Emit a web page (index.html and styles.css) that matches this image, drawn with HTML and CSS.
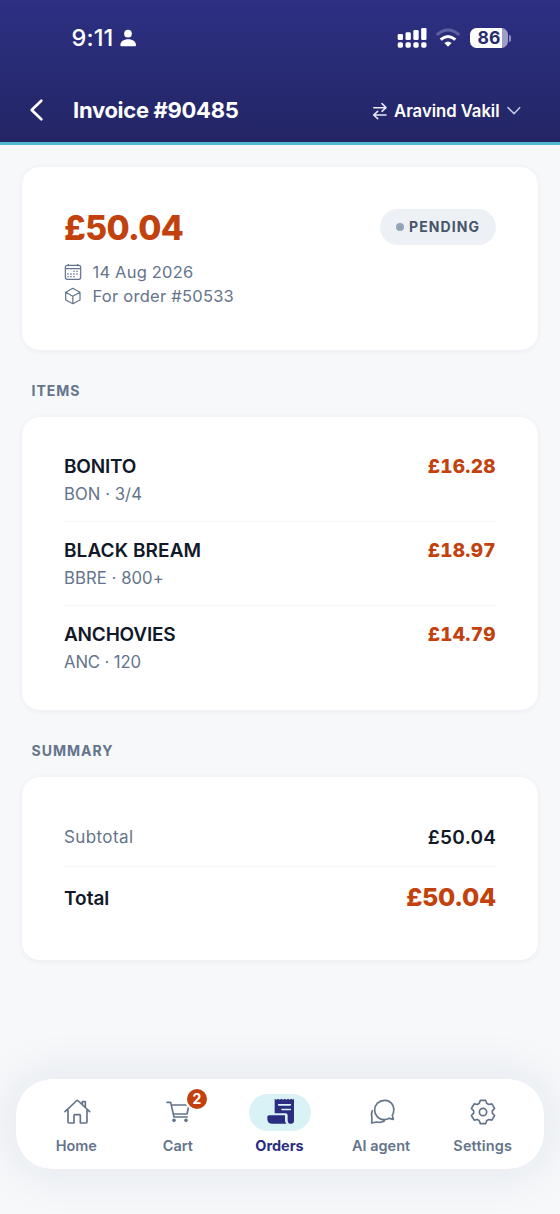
FILE: index.html
```html
<!DOCTYPE html>
<html lang="en">
<head>
<meta charset="utf-8">
<title>Invoice #90485</title>
<link rel="stylesheet" href="styles.css">
</head>
<body>
<div class="app">
  <header class="header">
    <div class="status">
      <div class="clock"><span class="time">9:11</span>
        <svg class="person" width="16" height="18" viewBox="362 87 48 54"><circle cx="386" cy="101" r="11.5"/><path d="M363 136c0-11 10-18 23.5-18S410 125 410 136q0 3-3 3H366q-3 0-3-3z"/></svg>
      </div>
      <div class="indicators">
        <svg width="30" height="22" viewBox="350 80 90 66" fill="#fff"><rect x="352" y="101" width="16" height="18" rx="4"/><rect x="375.500" y="96" width="16" height="23" rx="4"/><rect x="399" y="89" width="16" height="30" rx="4"/><rect x="422.500" y="83" width="16" height="36" rx="4"/><rect x="352" y="126" width="16" height="16" rx="5"/><rect x="375.500" y="126" width="16" height="16" rx="5"/><rect x="399" y="126" width="16" height="16" rx="5"/><rect x="422.500" y="126" width="16" height="16" rx="5"/></svg>
        <svg class="wifi" width="26" height="22" viewBox="466 80 78 66" fill="none"><path d="M471 104q34-30 68 0" stroke="#5f60a0" stroke-width="9"/><path d="M483 118q22-19 44 0" stroke="#fff" stroke-width="9"/><path d="M505 139l-11-11q11-9 22 0z" fill="#fff"/></svg>
        <div class="battery"><span class="battery-level">86</span></div><i class="battery-cap"></i>
      </div>
    </div>
    <div class="toolbar">
      <svg class="back" width="16" height="24" viewBox="86 295 48 72"><path d="M123 303L94 331l29 28"/></svg>
      <h1 class="title">Invoice #90485</h1>
      <div class="account">
        <svg width="16" height="18" viewBox="275 304 48 54" stroke="#e8e8f6"><path d="M280 321h36M305 309l12 12-12 11M317 343h-36M292 332l-12 11 12 11"/></svg>
        <span class="account-name">Aravind Vakil</span>
        <svg width="14" height="10" viewBox="683 317 42 30" stroke="#c3c4e2"><path d="M686 322l18 18 17-18"/></svg>
      </div>
    </div>
  </header>

  <main class="content">
    <section class="card overview">
      <div>
        <div class="amount">£50.04</div>
        <div class="meta"><svg width="18" height="18" viewBox="162 325 54 54"><rect x="166" y="332" width="46" height="42" rx="6"/><path d="M166 342h46M175 328v7M203 328v7"/><path class="dots" d="M190 350h4M199 350h4M172 358h4M181 358h4M190 358h4M199 358h4M172 366h4M181 366h4M190 366h4"/></svg><span class="date">14 Aug 2026</span></div>
        <div class="meta"><svg width="18" height="18" viewBox="162 395 54 54"><path d="M188.500 399l21.500 12v23l-21.500 11-21.500-11v-23zM167 411l21.500 12 21.500-12M188.500 423v22"/></svg><span class="order">For order #50533</span></div>
      </div>
      <div class="pill"><i class="dot"></i><span>PENDING</span></div>
    </section>

    <h2 class="label">ITEMS</h2>
    <section class="card items">
      <div class="item"><div><div class="name">BONITO</div><div class="sku">BON · 3/4</div></div><div class="price">£16.28</div></div>
      <div class="item"><div><div class="name wide">BLACK BREAM</div><div class="sku">BBRE · 800+</div></div><div class="price">£18.97</div></div>
      <div class="item"><div><div class="name">ANCHOVIES</div><div class="sku narrow">ANC · 120</div></div><div class="price">£14.79</div></div>
    </section>

    <h2 class="label">SUMMARY</h2>
    <section class="card summary">
      <div class="sum-row"><span class="sub-name">Subtotal</span><span class="sub-value">£50.04</span></div>
      <div class="sum-row total"><span class="total-name">Total</span><span class="total-value">£50.04</span></div>
    </section>
  </main>

  <nav class="tabs">
    <a class="tab"><span class="tab-icon"><svg viewBox="157 115 84 84"><path d="M163 156l34-32q3-3 6 0l34 32M215 133v-7h9v15M172 151v36q0 3 3 3h15v-23q0-2 2-2h15q2 0 2 2v23h17q3 0 3-3v-36"/></svg></span><span class="tab-text">Home</span></a>
    <a class="tab"><span class="tab-icon"><svg viewBox="462 115 84 84"><path d="M471 128h11l10 44h40M485 136h52l-6 27h-41"/><g fill="#64748b" stroke="none"><circle cx="492" cy="182" r="5.500"/><circle cx="528" cy="182" r="5.500"/></g></svg><b class="badge">2</b></span><span class="tab-text">Cart</span></a>
    <a class="tab active"><span class="tab-icon"><svg viewBox="165 85.500 84 84"><g fill="#2b2d80" stroke="none"><path d="M191 88l5 3 5-3 5 3 5-3 5 3 5-3 5 3 5-3 5 3 5-3 5 3 3-3v65q0 10-9 10-10 0-10-11v-15q0-6-6-6h-33z"/><path d="M174 137h46q2 0 2 2v14q0 6 4 10h-42q-15 0-15-15v-6q0-5 5-5z"/></g><path class="lines" d="M203 106h35M213 120h25"/></svg></span><span class="tab-text">Orders</span></a>
    <a class="tab"><span class="tab-icon"><svg viewBox="81 115 84 84"><path d="M154 167c10-18 3-45-24-45-16 0-29 13-29 29s12 29 29 29q8 0 15-4l12 3zM94 153c-5 10-2 18-1 23l-1 14 15-3q12 3 23-3"/></svg></span><span class="tab-text">AI agent</span></a>
    <a class="tab"><span class="tab-icon"><svg viewBox="-42 -42 84 84"><path d="M-8-35H8L11-26 17-22.500 26.500-24.500 34.800-10.500 28-3.500V3.500L34.800 10.500 26.500 24.500 17 22.500 11 26 8 35H-8L-11 26-17 22.500-26.500 24.500-34.800 10.500-28 3.500V-3.500L-34.800-10.500-26.500-24.500-17-22.500-11-26Z"/><circle r="11"/></svg></span><span class="tab-text settings">Settings</span></a>
  </nav>
</div>
</body>
</html>
```
FILE: styles.css
```css
* { box-sizing: border-box; }
body { margin: 0; font-family: Inter, "Liberation Sans", sans-serif; background: #f6f8fa; color: #111827; }
svg { display: block; flex: none; }
.app { height: 1214px; display: flex; flex-direction: column; overflow: hidden; }

.header { height: 145px; background: linear-gradient(#2d3083, #232565); border-bottom: 3px solid #50b8d1; color: #fff; }
.status { height: 76px; padding: 0 49px 0 71.5px; display: flex; align-items: center; justify-content: space-between; }
.clock { display: flex; align-items: center; gap: 7px; }
.time { font-size: 23.5px; font-weight: 500; letter-spacing: .1px; line-height: 28px; }
.person { fill: #fff; }
.indicators { display: flex; align-items: center; }
.wifi { margin: 0 9px 0 8px; }
.battery { width: 38px; height: 20px; border-radius: 6.5px; background: linear-gradient(90deg, #fff 32px, #9d9dc6 32px); display: flex; align-items: center; justify-content: center; }
.battery-level { color: #292b70; font-size: 17.5px; font-weight: 700; line-height: 20px; }
.battery-cap { width: 2px; height: 7px; margin-left: 1px; border-radius: 0 2px 2px 0; background: #8f90bd; }
.toolbar { height: 66px; padding: 2px 39px 0 28.5px; display: flex; align-items: center; }
.toolbar svg { fill: none; stroke-width: 4.6; stroke-linecap: round; stroke-linejoin: round; }
.toolbar .back { stroke: #fff; stroke-width: 8; }
.title { margin: 0 0 0 28.5px; font-size: 22px; font-weight: 700; letter-spacing: -0.3px; }
.account { margin: 1px 0 0 auto; display: flex; align-items: center; gap: 6.5px; }
.account-name { font-size: 16.7px; font-weight: 600; letter-spacing: -.04px; margin-right: 1px; }

.content { padding: 22px 22px 0; }
.card { padding: 0 42px; background: #fff; border-radius: 18px; box-shadow: 0 1px 6px rgba(30, 41, 90, .06); }
.overview { height: 182.5px; padding-top: 41px; display: flex; justify-content: space-between; align-items: flex-start; }
.amount { height: 52px; line-height: 41px; font-size: 33.5px; font-weight: 800; letter-spacing: -.6px; color: #c2410c; }
.meta { height: 24px; display: flex; align-items: center; gap: 10.5px; font-size: 16.5px; color: #64748b; }
.meta svg { fill: none; stroke: #64748b; stroke-width: 3.6; stroke-linejoin: round; }
.meta .dots { stroke-width: 4; }
.date { letter-spacing: .2px; }
.order { letter-spacing: .25px; }
.pill { width: 116px; height: 36px; margin-top: .5px; padding-left: 16px; border-radius: 18px; background: #edf1f6; color: #475569; display: flex; align-items: center; gap: 5px; font-size: 14px; font-weight: 700; letter-spacing: 1.1px; }
.pill span { margin-top: -1px; }
.dot { width: 8px; height: 8px; border-radius: 50%; background: #94a3b8; }

.label { margin: 0; padding-left: 9.5px; height: 67.5px; font-size: 14px; line-height: 81px; font-weight: 700; letter-spacing: 1px; color: #64748b; }
.items { height: 292.5px; padding-top: 21px; }
.item { height: 83.75px; padding-top: 15px; display: flex; justify-content: space-between; border-bottom: 1px solid #f6f7f9; }
.item:last-child { border-bottom: 0; }
.name { height: 28px; line-height: 28px; font-size: 19px; font-weight: 600; letter-spacing: -.2px; }
.name.wide { letter-spacing: .08px; }
.sku { line-height: 27px; font-size: 16.7px; letter-spacing: .05px; color: #64748b; }
.sku.narrow { letter-spacing: -.12px; }
.price { line-height: 28px; font-size: 19px; font-weight: 800; letter-spacing: .25px; margin-right: .25px; font-variant-numeric: tabular-nums; color: #c2410c; }
.summary { height: 183px; padding-top: 31.5px; }
.sum-row { height: 58px; display: flex; align-items: center; justify-content: space-between; border-bottom: 1px solid #f4f6f8; }
.sum-row.total { height: 61px; border: 0; }
.sub-name { font-size: 17px; letter-spacing: .4px; color: #64748b; }
.sub-value { font-size: 19px; font-weight: 600; letter-spacing: .3px; margin-right: -.3px; }
.total-name { margin-top: 2px; font-size: 19px; font-weight: 600; }
.total-value { margin-top: -1px; font-size: 25px; font-weight: 800; letter-spacing: -.3px; color: #c2410c; }

.tabs { height: 90.5px; margin: auto 16px 45px; padding: 15.5px 10px 0; display: flex; background: #fff; border-radius: 36px; box-shadow: 0 0 48px 6px rgba(30, 41, 90, .08); }
.tab { flex: 1; display: flex; flex-direction: column; align-items: center; color: #64748b; }
.tab-icon { position: relative; width: 62px; height: 37px; border-radius: 19px; display: flex; align-items: center; justify-content: center; }
.tab-icon svg { width: 28px; height: 28px; margin-top: -.5px; fill: none; stroke: #64748b; stroke-width: 5; stroke-linecap: round; stroke-linejoin: round; }
.tab-text { margin: 4.5px 1px 0 0; line-height: 20px; font-size: 14.5px; font-weight: 600; }
.settings { letter-spacing: .15px; }
.active { color: #2b2d80; }
.active .tab-icon { background: #d9f2f6; }
.tab-icon .lines { stroke: #d9f2f6; stroke-width: 5; }
.active .tab-text { font-weight: 700; }
.badge { position: absolute; left: 37.5px; top: -7px; width: 24px; height: 24px; border: 2px solid #fff; border-radius: 50%; background: #c2410c; color: #fff; font-size: 14px; line-height: 20px; text-align: center; }
```
